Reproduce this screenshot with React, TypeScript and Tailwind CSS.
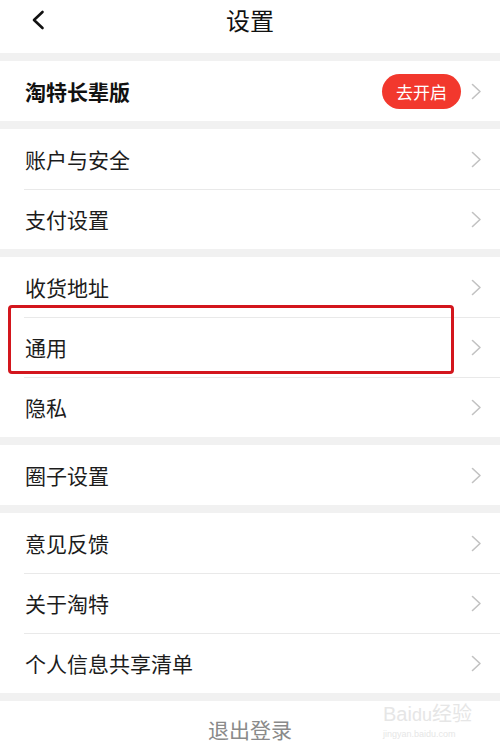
import React from "react";

const Chevron = () => (
  <svg width="11" height="17" viewBox="0 0 11 17" fill="none" className="shrink-0">
    <polyline points="1.5,1.5 9,8.5 1.5,15.5" stroke="#c2c2c2" strokeWidth="1.6" strokeLinecap="round" strokeLinejoin="round" />
  </svg>
);

const Row = ({ label, first }: { label: string; first?: boolean }) => (
  <div className="pl-[24px] bg-white">
    <div
      className={
        "h-[60px] flex items-center justify-between pr-[18px] " +
        (first ? "" : "border-t border-[#e9e9e9]")
      }
    >
      <span className="text-[21px] text-[#1c1c1c] leading-none pl-px">{label}</span>
      <Chevron />
    </div>
  </div>
);

const Band = () => <div className="h-[8px] bg-[#f1f1f1]" />;

export default function App() {
  return (
    <div
      className="relative w-[500px] h-[756px] overflow-hidden bg-white"
      style={{ fontFamily: '"Noto Sans CJK SC", "Noto Sans", sans-serif' }}
    >
      {/* Header */}
      <div className="h-[53px] bg-white">
        <div className="h-[39px] grid grid-cols-[1fr_auto_1fr] items-center">
          <div className="pl-[31px] flex items-center">
            <svg width="14" height="20" viewBox="0 0 14 20" fill="none">
              <polyline points="11.5,2 3,10 11.5,18" stroke="#111" strokeWidth="2.6" strokeLinecap="round" strokeLinejoin="round" />
            </svg>
          </div>
          <div className="text-[24px] text-[#111] leading-none">设置</div>
          <div />
        </div>
      </div>
      <Band />
      <div className="pl-[24px] bg-white">
        <div className="h-[60px] flex items-center justify-between pr-[18px]">
          <span className="text-[21px] font-bold text-[#111] leading-none pl-px">淘特长辈版</span>
          <div className="flex items-center gap-[10px]">
            <div className="h-[35px] w-[79px] rounded-full bg-[#f2382d] flex items-center justify-center text-white text-[17px] leading-none">
              去开启
            </div>
            <Chevron />
          </div>
        </div>
      </div>
      <Band />
      <Row label="账户与安全" first />
      <Row label="支付设置" />
      <Band />
      <Row label="收货地址" first />
      <Row label="通用" />
      <Row label="隐私" />
      <Band />
      <Row label="圈子设置" first />
      <Band />
      <Row label="意见反馈" first />
      <Row label="关于淘特" />
      <Row label="个人信息共享清单" />
      <Band />
      <div className="h-[56px] flex items-center justify-center bg-white">
        <span className="text-[21px] text-[#8a8a8a] leading-none">退出登录</span>
      </div>

      {/* Annotation highlight */}
      <div className="absolute left-[8px] top-[305px] w-[446px] h-[69px] border-[3px] border-[#d3161d] rounded-[4px]" />

      {/* Watermark */}
      <div className="absolute left-[383px] top-[704px] flex flex-col items-start leading-none text-[#e6e6e6]">
        <span className="text-[20px]" style={{ fontFamily: '"Liberation Sans", "Noto Sans CJK SC", sans-serif' }}>Bai<span className="text-[18px]">du</span>经验</span>
        <span className="text-[9px] mt-[6px]" style={{ fontFamily: '"Liberation Sans", sans-serif' }}>jingyan.baidu.com</span>
      </div>
    </div>
  );
}
